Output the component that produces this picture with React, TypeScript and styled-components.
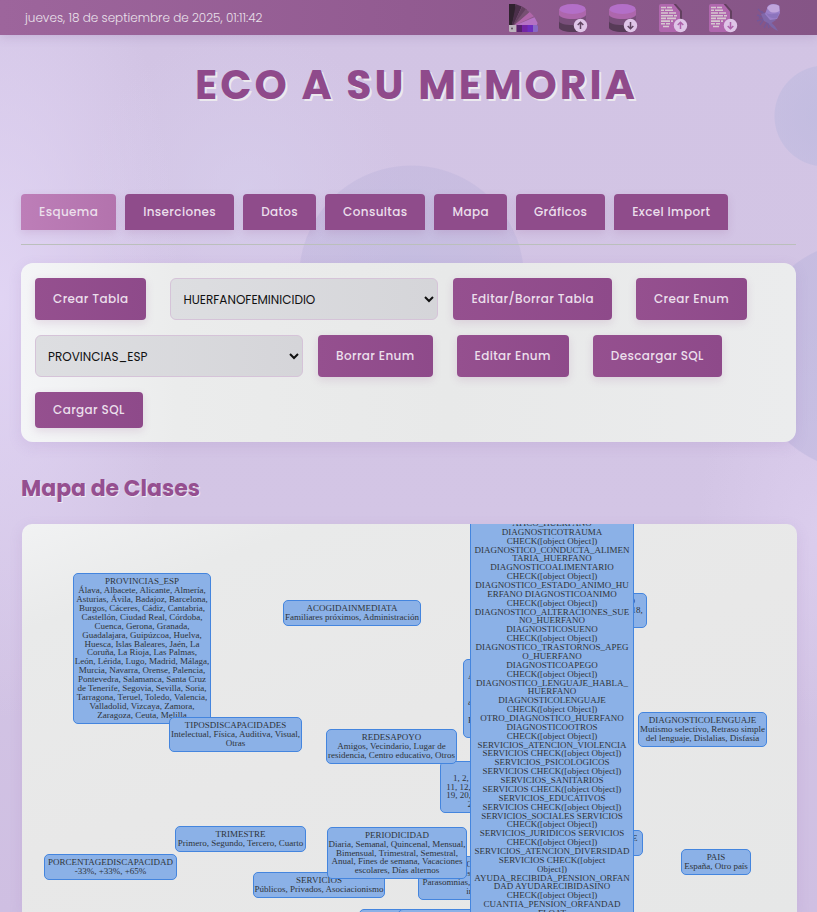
import React from "react";
import styled, { createGlobalStyle } from "styled-components";

const GlobalStyle = createGlobalStyle`
  *, *::before, *::after { box-sizing: border-box; }
  body { margin: 0; font-family: "Poppins", sans-serif; font-size: 12px; }
  button, select { font-family: inherit; font-size: inherit; }
`;

const Page = styled.div`
  display: flex;
  flex-direction: column;
  height: 100vh;
  overflow: hidden;
  background-image:
    radial-gradient(circle 51px at calc(100% + 8px) 116px, rgba(186, 184, 222, 0.65) 0%, rgba(186, 184, 222, 0.5) 98%, transparent 100%),
    radial-gradient(circle 113px at calc(50% + 3px) 278px, rgba(186, 184, 222, 0.55) 0%, rgba(186, 178, 218, 0.4) 99%, transparent 100%),
    radial-gradient(circle 116px at calc(100% + 48px) 356px, rgba(186, 184, 222, 0.6) 0%, rgba(186, 180, 220, 0.5) 99%, transparent 100%),
    radial-gradient(ellipse 180px 420px at 0 300px, rgba(226, 214, 245, 0.9), rgba(226, 214, 245, 0) 100%),
    radial-gradient(ellipse 160px 160px at 30% 190px, rgba(216, 208, 238, 0.6), rgba(216, 208, 238, 0) 100%),
    radial-gradient(ellipse 120px 200px at 100% 530px, rgba(222, 208, 240, 0.7), rgba(222, 208, 240, 0) 100%),
    linear-gradient(180deg, #d2c4e4 0%, #d3c5e5 60%, #cfbfe2 100%);
`;

const TopBar = styled.header`
  display: flex;
  align-items: center;
  justify-content: space-between;
  flex: none;
  height: 35px;
  padding: 0 30px 0 25px;
  background: linear-gradient(90deg, #9d659c 0%, #925b91 50%, #855586 100%);
  box-shadow: 0 2px 10px rgba(120, 80, 140, 0.2);
`;

const Clock = styled.time`
  color: #e9e0ea;
  font-weight: 300;
  line-height: 18px;
`;

const IconBar = styled.nav`
  display: flex;
  gap: 22px;
`;

const IconButton = styled.button`
  display: block;
  width: 28px;
  height: 28px;
  padding: 0;
  border: 0;
  background: none;
  cursor: pointer;

  svg { display: block; overflow: visible; }
`;

const Content = styled.main`
  display: flex;
  flex: 1;
  flex-direction: column;
  min-height: 0;
  padding: 20px 21px 0;
`;

const Title = styled.h1`
  margin: 0;
  padding-left: 16px;
  color: #8f4a8b;
  font-size: 41px;
  font-weight: 700;
  letter-spacing: 3px;
  line-height: 60px;
  text-align: center;
  text-shadow: 2px 2px 0 #ebe9ee;
`;

const Tabs = styled.nav`
  display: flex;
  gap: 9px;
  margin-top: 79px;
  padding-bottom: 14px;
  border-bottom: 1px solid #bbbfbc;
`;

const ActionButton = styled.button`
  min-height: 36px;
  padding: 0 18px;
  border: 0;
  border-radius: 4px;
  background: linear-gradient(90deg, #95508f, #8e4a8a);
  box-shadow: 0 3px 8px rgba(142, 74, 138, 0.16);
  color: #ebdfeb;
  font-weight: 500;
  letter-spacing: 0.03em;
  line-height: 18px;
  white-space: nowrap;
  cursor: pointer;
`;

const Tab = styled(ActionButton)<{ $active: boolean }>`
  border-radius: 4px 4px 0 0;
  background: ${(p) => (p.$active ? "linear-gradient(90deg, #bd7eb8, #b373ad)" : "#8f4c8b")};
`;

const Tools = styled.section`
  display: flex;
  flex-wrap: wrap;
  gap: 15px;
  margin-top: 18px;
  padding: 15px 14px 14px;
  border-radius: 12px;
  background: linear-gradient(90deg, #f4f5f7 0%, #ebecec 20%, #e8e9e9 55%, #ebeced 100%);
  box-shadow: 0 4px 14px rgba(140, 100, 180, 0.14);
`;

const ToolButton = styled(ActionButton)`
  margin-right: 9px;
`;

const Picker = styled.select`
  flex: 0 0 268px;
  height: 42px;
  padding: 0 8px;
  border: 1px solid #d5c3d8;
  border-radius: 6px;
  background: linear-gradient(90deg, #dddee1, #d5d5d9);
  color: #111;
`;

const Heading = styled.h2`
  margin: 30px 0 19px;
  color: #954f90;
  font-size: 22px;
  font-weight: 700;
  line-height: 33px;
  text-shadow: 1px 1px 0 #efeaf4;
`;

const Canvas = styled.section`
  position: relative;
  flex: 1;
  min-height: 0;
  overflow: hidden;
  margin: 0 -1px 0 1px;
  border-radius: 10px 10px 0 0;
  background: linear-gradient(160deg, #f1f2f3 0%, #e9eaea 16%, #e8e8e8 50%, #e6e7e7 100%);
  box-shadow: 0 4px 14px rgba(140, 100, 180, 0.14);
`;

const NodeBox = styled.article<{ $x: number; $y: number; $w: number; $h: number; $align: string }>`
  position: absolute;
  left: ${(p) => p.$x}px;
  top: ${(p) => p.$y}px;
  display: grid;
  grid-template-columns: 100%;
  grid-auto-rows: minmax(0, 1fr);
  justify-items: ${(p) => p.$align};
  width: ${(p) => p.$w}px;
  height: ${(p) => p.$h}px;
  padding: 3px 4px;
  border: 1px solid #4485de;
  border-radius: 5px;
  background: #8bb1e7;
  color: #2f3439;
  font-family: "Liberation Serif", serif;
  font-size: 9px;
  line-height: 9px;
`;

const Line = styled.span`
  display: flex;
  align-items: center;
  justify-content: center;
  white-space: nowrap;
`;

type GraphNode = { x: number; y: number; w: number; h: number; lines: string[]; align?: string };

const CHECK = "CHECK([object Object])";

const nodes: GraphNode[] = [
  { x: 51, y: 49, w: 138, h: 151, lines: [
    "PROVINCIAS_ESP", "Álava, Albacete, Alicante, Almería,", "Asturias, Ávila, Badajoz, Barcelona,",
    "Burgos, Cáceres, Cádiz, Cantabria,", "Castellón, Ciudad Real, Córdoba,", "Cuenca, Gerona, Granada,",
    "Guadalajara, Guipúzcoa, Huelva,", "Huesca, Islas Baleares, Jaén, La", "Coruña, La Rioja, Las Palmas,",
    "León, Lérida, Lugo, Madrid, Málaga,", "Murcia, Navarra, Orense, Palencia,", "Pontevedra, Salamanca, Santa Cruz",
    "de Tenerife, Segovia, Sevilla, Soria,", "Tarragona, Teruel, Toledo, Valencia,", "Valladolid, Vizcaya, Zamora,",
    "Zaragoza, Ceuta, Melilla"] },
  { x: 147, y: 193, w: 133, h: 35, lines: ["TIPOSDISCAPACIDADES", "Intelectual, Física, Auditiva, Visual,", "Otras"] },
  { x: 261, y: 76, w: 138, h: 26, lines: ["ACOGIDAINMEDIATA", "Familiares próximos, Administración"] },
  { x: 441, y: 135, w: 90, h: 79, align: "start", lines: ["", "A", "", "", "a", "", "P", ""] },
  { x: 418, y: 237, w: 118, h: 52, lines: ["DIA", "1, 2, 3, 4, 5, 6, 7, 8, 9, 10,", "11, 12, 13, 14, 15, 16, 17, 18,", "19, 20, 21, 22, 23, 24, 25, 26,", "27, 28, 29, 30, 31"] },
  { x: 304, y: 205, w: 131, h: 35, lines: ["REDESAPOYO", "Amigos, Vecindario, Lugar de", "residencia, Centro educativo, Otros"] },
  { x: 153, y: 302, w: 131, h: 26, lines: ["TRIMESTRE", "Primero, Segundo, Tercero, Cuarto"] },
  { x: 22, y: 330, w: 133, h: 26, lines: ["PORCENTAGEDISCAPACIDAD", "-33%, +33%, +65%"] },
  { x: 231, y: 348, w: 132, h: 26, lines: ["SERVICIOS", "Públicos, Privados, Asociacionismo"] },
  { x: 396, y: 332, w: 130, h: 44, lines: ["DIAGNOSTICOSUENO", "Terrores, Hipersomnia,", "Parasomnias, Otros trastornos del", "insomnio"] },
  { x: 305, y: 303, w: 140, h: 52, lines: ["PERIODICIDAD", "Diaria, Semanal, Quincenal, Mensual,", "Bimensual, Trimestral, Semestral,", "Anual, Fines de semana, Vacaciones", "escolares, Días alternos"] },
  { x: 337, y: 385, w: 120, h: 35, lines: [""] },
  { x: 376, y: 385, w: 120, h: 35, lines: [""] },
  { x: 524, y: 69, w: 101, h: 35, lines: ["EDADESACOGIDO", "12, 13, 14, 15, 16, 17, 18,", ""] },
  { x: 515, y: 306, w: 106, h: 26, lines: ["ESTADOSEXPEDIENTE", ""] },
  { x: 616, y: 188, w: 129, h: 35, lines: ["DIAGNOSTICOLENGUAJE", "Mutismo selectivo, Retraso simple", "del lenguaje, Dislalias, Disfasia"] },
  { x: 659, y: 325, w: 70, h: 26, lines: ["PAIS", "España, Otro país"] },
  { x: 448, y: -9, w: 164, h: 407, lines: [
    "ATICO_HUERFANO", "DIAGNOSTICOTRAUMA", CHECK,
    "DIAGNOSTICO_CONDUCTA_ALIMEN", "TARIA_HUERFANO", "DIAGNOSTICOALIMENTARIO", CHECK,
    "DIAGNOSTICO_ESTADO_ANIMO_HU", "ERFANO DIAGNOSTICOANIMO", CHECK,
    "DIAGNOSTICO_ALTERACIONES_SUE", "NO_HUERFANO", "DIAGNOSTICOSUENO", CHECK,
    "DIAGNOSTICO_TRASTORNOS_APEG", "O_HUERFANO", "DIAGNOSTICOAPEGO", CHECK,
    "DIAGNOSTICO_LENGUAJE_HABLA_", "HUERFANO", "DIAGNOSTICOLENGUAJE", CHECK,
    "OTRO_DIAGNOSTICO_HUERFANO", "DIAGNOSTICOOTROS", CHECK,
    "SERVICIOS_ATENCION_VIOLENCIA", "SERVICIOS " + CHECK,
    "SERVICIOS_PSICOLOGICOS", "SERVICIOS " + CHECK,
    "SERVICIOS_SANITARIOS", "SERVICIOS " + CHECK,
    "SERVICIOS_EDUCATIVOS", "SERVICIOS " + CHECK,
    "SERVICIOS_SOCIALES SERVICIOS", CHECK,
    "SERVICIOS_JURIDICOS SERVICIOS", CHECK,
    "SERVICIOS_ATENCION_DIVERSIDAD", "SERVICIOS CHECK([object", "Object])",
    "AYUDA_RECIBIDA_PENSION_ORFAN", "DAD AYUDARECIBIDASINO", CHECK,
    "CUANTIA_PENSION_ORFANDAD", "FLOAT"] },
];

const Arrow = ({ up, color }: { up: boolean; color: string }) => (
  <g>
    <circle cx="21.5" cy="21.5" r="6.7" fill="#dfc5e8" />
    <path
      d={up ? "M21.5 25V18.4M18.7 21l2.8-2.8 2.8 2.8" : "M21.5 18v6.6M18.7 22l2.8 2.8 2.8-2.8"}
      fill="none" stroke={color} strokeWidth="1.5"
    />
  </g>
);

const PaletteIcon = () => (
  <svg width="28" height="28" viewBox="0 0 28 28" aria-hidden="true">
    <path d="M0 0h6.5L7 5 3 21H0z" fill="#30222f" />
    <path d="M7 .3l5.8 2.2L4.5 21H2.8z" fill="#4b2f4a" />
    <path d="M13.2 2.4l4.6 3L5.5 21H4z" fill="#63405f" />
    <path d="M16.8 5l3.6 3.3L6 21H4.7z" fill="#775072" />
    <path d="M20.7 8l4.2 4.3L7 21H5.5z" fill="#b066a9" />
    <path d="M25.5 13.2L28.6 19l-.7 2H7z" fill="#b572c5" />
    <path d="M8 21h7v7H8z" fill="#57216c" />
    <path d="M13 21h7v7h-7z" fill="#7425a4" />
    <path d="M18.5 21h6v7h-6z" fill="#6f2cc0" />
    <path d="M24 21h3.500q1.500 0 1.500 1.500v4q0 1.500-1.500 1.500H24z" fill="#8868c4" />
    <path d="M0 21h7v7H1.500Q0 28 0 26.500z" fill="#bcb3bd" />
    <circle cx="3" cy="24.5" r="1" fill="#5f545f" />
  </svg>
);

const DatabaseIcon = ({ up }: { up: boolean }) => (
  <svg width="28" height="28" viewBox="0 0 28 28" aria-hidden="true">
    <path d="M0 16v7.500C0 26 6 28 13.500 28S27 26 27 23.500V16z" fill="#573b58" />
    <path d="M0 10v7c0 2.500 6 4 13.500 4S27 19.500 27 17v-7z" fill="#784e7a" />
    <path d="M0 5v5.500C0 13 6 15 13.500 15S27 13 27 10.500V5z" fill="#ad66ac" />
    <ellipse cx="13.5" cy="5" rx="13" ry="5" fill="#b36fc8" />
    <Arrow up={up} color="#604461" />
  </svg>
);

const DocumentIcon = ({ up }: { up: boolean }) => (
  <svg width="28" height="28" viewBox="0 0 28 28" aria-hidden="true">
    <path d="M14 0h3l6 7v15h-6z" fill="#62405f" />
    <path d="M2 0h12.500l6.500 7.500V28H2q-2 0-2-2V2q0-2 2-2z" fill="#b067ae" />
    <path
      d="M2 3.500h5m1 0h5M2 6.300h3m1 0h8M2 9h7m1 0h7M2 11.700h12m1 0h3M2 14.400h5m1 0h9M2 17.100h9m1 0h2M2 19.800h4m1 0h4M4 22.500h6"
      stroke="#d6c8d0" strokeWidth="1.6"
    />
    <Arrow up={up} color="#ad62ab" />
  </svg>
);

const RoseIcon = () => (
  <svg width="28" height="28" viewBox="0 0 28 28" aria-hidden="true">
    <path d="M9 15c3 4 7 6 10 12-5-2-8-5-11-9z" fill="#7c66a8" />
    <path
      d="M-1 5l4 4 7 1M-2 17l6-2 4-4M1 21l4-6M5 24l4-8M-2 11l8 3M10 24l-2-8M3 7l3 6M0 14l5-3"
      fill="none" stroke="#74589a" strokeWidth="1.4"
    />
    <path d="M2 10l7-2 8 8-6 4-6-3z" fill="#8068aa" />
    <path d="M9 2c3-3 9-2 11.500 0l.5 7-3 6-7 1-5-6z" fill="#9a7fc8" />
    <path d="M8 4c3-5 9-4 12-2l.5 5c-4 2-8 2-10 0z" fill="#c0a5dc" />
    <path d="M7 9c4 2 9 1 13 0l-2 5c-4 1-8 0-11-5z" fill="#8c74bd" />
  </svg>
);

const icons = [
  { label: "Paleta de colores", icon: <PaletteIcon /> },
  { label: "Subir base de datos", icon: <DatabaseIcon up /> },
  { label: "Bajar base de datos", icon: <DatabaseIcon up={false} /> },
  { label: "Subir documento", icon: <DocumentIcon up /> },
  { label: "Bajar documento", icon: <DocumentIcon up={false} /> },
  { label: "Inicio", icon: <RoseIcon /> },
];

const tabs = ["Esquema", "Inserciones", "Datos", "Consultas", "Mapa", "Gráficos", "Excel Import"];

export default function App() {
  return (
    <Page>
      <GlobalStyle />
      <TopBar>
        <Clock dateTime="2025-09-18T01:11:42">jueves, 18 de septiembre de 2025, 01:11:42</Clock>
        <IconBar>
          {icons.map((i) => (
            <IconButton key={i.label} type="button" aria-label={i.label}>{i.icon}</IconButton>
          ))}
        </IconBar>
      </TopBar>
      <Content>
        <Title>ECO A SU MEMORIA</Title>
        <Tabs>
          {tabs.map((t) => (
            <Tab key={t} type="button" $active={t === "Esquema"}>{t}</Tab>
          ))}
        </Tabs>
        <Tools>
          <ToolButton type="button">Crear Tabla</ToolButton>
          <Picker aria-label="Tabla"><option>HUERFANOFEMINICIDIO</option></Picker>
          <ToolButton type="button">Editar/Borrar Tabla</ToolButton>
          <ToolButton type="button">Crear Enum</ToolButton>
          <Picker aria-label="Enum"><option>PROVINCIAS_ESP</option></Picker>
          <ToolButton type="button">Borrar Enum</ToolButton>
          <ToolButton type="button">Editar Enum</ToolButton>
          <ToolButton type="button">Descargar SQL</ToolButton>
          <ToolButton type="button">Cargar SQL</ToolButton>
        </Tools>
        <Heading>Mapa de Clases</Heading>
        <Canvas aria-label="Mapa de Clases">
          {nodes.map((n, i) => (
            <NodeBox key={i} $x={n.x} $y={n.y} $w={n.w} $h={n.h} $align={n.align ?? "center"}>
              {n.lines.map((line, j) => <Line key={j}>{line}</Line>)}
            </NodeBox>
          ))}
        </Canvas>
      </Content>
    </Page>
  );
}
